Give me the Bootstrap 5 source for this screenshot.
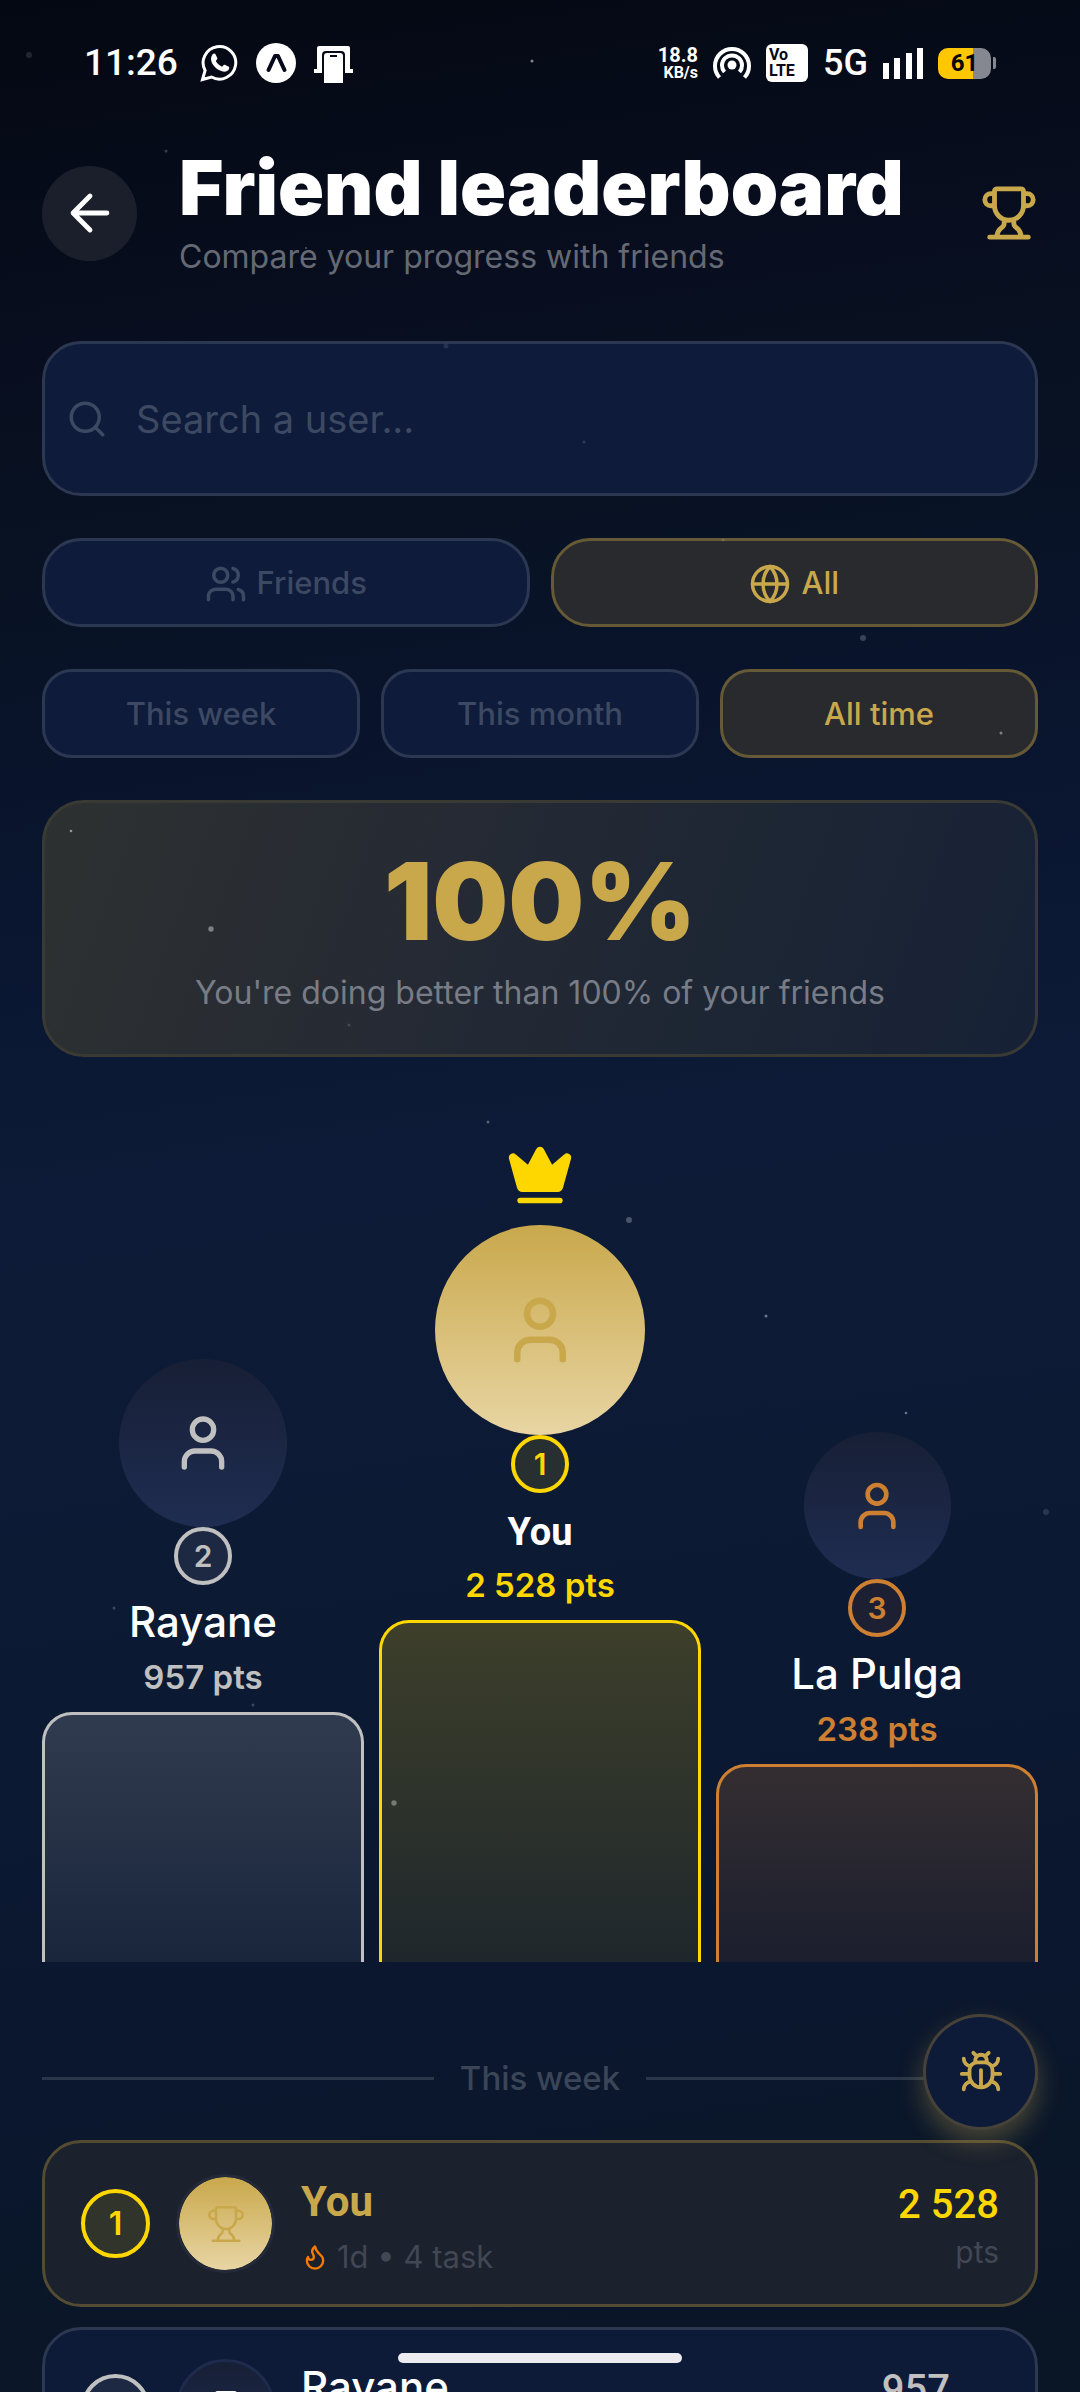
<!DOCTYPE html>
<html lang="en">
<head>
<meta charset="utf-8">
<meta name="viewport" content="width=device-width, initial-scale=1">
<title>Friend leaderboard</title>
<link href="https://cdn.jsdelivr.net/npm/bootstrap@5.3.0/dist/css/bootstrap.min.css" rel="stylesheet">
<style>
  :root { --gold:#c9a84c; --yellow:#ffd700; --silver:#c0c0c0; --bronze:#cd7f32; --line:#2c3752; --panel:#0e1b3a; --muted:#3d4962; }
  body { font-family:Inter,"Noto Sans",sans-serif; background:#070d1b; color:#fff; }
  svg { display:block; flex:none; }
  .ico { fill:none; stroke:currentColor; stroke-width:2; stroke-linecap:round; stroke-linejoin:round; }
  .i28 { width:28px; height:28px; } .i40 { width:40px; height:40px; } .i42 { width:42px; height:42px; } .i46 { width:46px; height:46px; }
  .i56 { width:56px; height:56px; } .i58 { width:58px; height:58px; } .i64 { width:64px; height:64px; }
  .i68 { width:68px; height:68px; } .i78 { width:78px; height:78px; }
  .roboto { font-family:Roboto,"Liberation Sans",sans-serif; }
  .screen { height:100vh; background:linear-gradient(172deg,#040812 0%,#080e1f 14%,#081222 22%,#09142c 31%,#0d1b38 48%,#0c1a34 62%,#0b172f 82%,#0a1729 90%,#0a1525 100%); }
  .sky { inset:0; width:100%; height:100%; pointer-events:none; z-index:2; }
  .gutter { padding-left:42px; padding-right:42px; }

  .status { height:126px; padding-left:84px; padding-right:84px; }
  .clock { font-size:37px; font-weight:500; line-height:40px; margin-right:22px; }
  .signals { gap:15px; }
  .speed { font-size:20px; line-height:20px; font-weight:700; }
  .speed small { display:block; font-size:16px; line-height:16px; }
  .volte { width:42px; height:38px; border-radius:6px; background:#fff; color:#05091a; font-size:16px; line-height:16px; font-weight:700; padding:3px; }
  .net { font-size:36px; line-height:40px; font-weight:500; }
  .battery { width:53px; height:31px; border-radius:10px; background:linear-gradient(90deg,#ffc700 66%,#868891 66%); color:#000; font-size:24px; line-height:31px; font-weight:700; }
  .nub { width:3px; height:12px; border-radius:0 2px 2px 0; background:#868891; margin-left:2px; }

  .head { padding-top:21px; gap:42px; }
  .back { width:95px; height:95px; background:#1a1f2b; color:#fff; border:0; }
  .title { font-size:76px; line-height:80px; font-weight:900; }
  .subtitle { font-size:32px; line-height:44px; margin-top:8px; color:#656974; }
  .gold { color:var(--gold); }

  .stack { padding-top:62px; display:flex; flex-direction:column; gap:42px; }
  .search { height:155px; border:3px solid var(--line); border-radius:39px; background:var(--panel); color:var(--muted); padding:0 21px; gap:28px; }
  .search input { background:none; border:0; outline:0; color:#fff; font-size:38px; line-height:48px; min-width:0; padding:0; }
  .search input::placeholder { color:var(--muted); opacity:1; }
  .gap21 { gap:21px; }
  .pill { flex:1 1 0; height:89px; border:3px solid var(--line); border-radius:39px; background:var(--panel); color:var(--muted); font-size:31px; font-weight:500; gap:10px; padding:2px 0 0; }
  .pill.slim { border-radius:30px; }
  .pill.on { border-color:#655936; background:#282a2e; color:var(--gold); }
  .better { border:3px solid #3a3a35; border-radius:42px; padding:40px; background:linear-gradient(110deg,#2d3131 0%,#252a34 40%,#1d2634 70%,#172136 100%); }
  .percent { font-size:107px; line-height:116px; font-weight:900; color:var(--gold); }
  .better p { font-size:32px; line-height:42px; margin:13px 0 0; color:#787c86; }

  .podium { padding-top:84px; gap:15px; }
  .place { flex:1 1 0; min-width:0; color:var(--tone); }
  .crown { margin-bottom:16px; }
  .face { border-radius:50%; background:linear-gradient(#171f35,#1f2d52); display:flex; align-items:center; justify-content:center; }
  .face.you { background:linear-gradient(#c9a84c,#e8d5a3); color:var(--gold); }
  .f210 { width:210px; height:210px; } .f168 { width:168px; height:168px; } .f147 { width:147px; height:147px; }
  .rank { width:58px; height:58px; border:4px solid var(--tone); border-radius:50%; background:var(--fill); font-size:30px; line-height:1; font-weight:600; color:var(--tone); display:flex; align-items:center; justify-content:center; flex:none; }
  .who { font-size:42px; line-height:52px; margin-top:11px; color:#fff; font-weight:500; }
  .who .roboto { font-size:38px; line-height:1; font-weight:700; }
  .pts { font-size:33px; line-height:42px; margin:8px 0 14px; font-weight:600; }
  .block { width:100%; border:3px solid var(--tone); border-bottom:0; border-radius:30px 30px 0 0; background:var(--slab); }
  .first { --tone:var(--yellow); --fill:#272f30; --slab:linear-gradient(#3d3f2a,#1f272c); }
  .second { --tone:var(--silver); --fill:#1d2942; --slab:linear-gradient(#313b4f,#19263b); }
  .third { --tone:var(--bronze); --fill:#1d2032; --slab:linear-gradient(#342e31,#1b1e2e); }
  .h1st { height:342px; } .h2nd { height:250px; } .h3rd { height:198px; }
  .second .f168, .third .f147 { margin-top:1px; }

  .period { margin:95px 0 41px; gap:26px; font-size:33px; line-height:42px; color:#3b4558; font-weight:500; }
  .period::before,.period::after { content:""; flex:1; height:3px; background:#2a3649; }
  .entry { border:3px solid var(--line); border-radius:39px; background:#0d1b39; padding:29px 36px; gap:26px; margin-bottom:20px; }
  .entry.me { background:#1b212d; border-color:#544c32; }
  .entry .rank { width:69px; height:69px; font-size:32px; }
  .entry .me-rank { --fill:#31342a; }
  .thumb { width:99px; height:99px; border:3px solid #1f2b4c; flex:none; background-clip:padding-box !important; }
  .thumb .ico { stroke-width:1.5; }
  .me .thumb { border-color:#242a38; }
  .nick { font-size:42px; line-height:50px; font-weight:500; }
  .me .nick { line-height:60px; font-weight:700; color:var(--gold); }
  .meta { font-size:31px; line-height:36px; margin-top:7px; color:#414754; gap:8px; }
  .score { font-size:40px; line-height:54px; font-weight:500; color:var(--tone); }
  .unit { font-size:30px; line-height:34px; margin-top:3px; color:#414754; }
  .more { margin-left:-5px; }
  .flame { color:#f57c00; }
  .fab { right:42px; bottom:262px; width:115px; height:116px; border:3px solid #464239; background:#0d1a38; box-shadow:0 12px 26px rgba(201,168,76,.32); z-index:3; padding:0; }
  .homebar { left:0; right:0; bottom:29px; width:284px; height:10px; border-radius:5px; background:#ebebf0; z-index:4; }
</style>
</head>
<body>
<svg class="d-none" aria-hidden="true">
  <symbol id="user" viewBox="0 0 24 24"><path d="M19 21v-2a4 4 0 0 0-4-4H9a4 4 0 0 0-4 4v2"/><circle cx="12" cy="7" r="4"/></symbol>
  <symbol id="trophy" viewBox="0 0 24 24"><path d="M10 14.66v1.626a2 2 0 0 1-.976 1.696A5 5 0 0 0 7 21.978M14 14.66v1.626a2 2 0 0 0 .976 1.696A5 5 0 0 1 17 21.978M18 9h1.5a1 1 0 0 0 0-5H18M4 22h16M6 9a6 6 0 0 0 12 0V3a1 1 0 0 0-1-1H7a1 1 0 0 0-1 1zM6 9H4.5a1 1 0 0 1 0-5H6"/></symbol>
</svg>

<div class="screen position-relative overflow-hidden">
  <svg class="sky position-absolute" viewBox="0 0 1080 2392" preserveAspectRatio="none" fill="#fff" aria-hidden="true">
    <circle cx="29" cy="55" r="3" opacity=".12"/><circle cx="166" cy="151" r="1.5" opacity=".2"/><circle cx="532" cy="61" r="1.5" opacity=".5"/><circle cx="306" cy="248" r="1" opacity=".3"/><circle cx="446" cy="346" r="2.5" opacity=".1"/><circle cx="584" cy="442" r="1.5" opacity=".15"/><circle cx="723" cy="540" r="1.5" opacity=".15"/><circle cx="863" cy="638" r="3" opacity=".2"/><circle cx="1001" cy="733" r="1.5" opacity=".4"/><circle cx="71" cy="831" r="1.3" opacity=".5"/><circle cx="211" cy="929" r="2.7" opacity=".4"/><circle cx="349" cy="1025" r="1.5" opacity=".15"/><circle cx="488" cy="1122" r="1.5" opacity=".3"/><circle cx="629" cy="1220" r="3" opacity=".25"/><circle cx="766" cy="1316" r="1.5" opacity=".4"/><circle cx="906" cy="1413" r="1.3" opacity=".4"/><circle cx="1046" cy="1512" r="3" opacity=".13"/><circle cx="114" cy="1608" r="1.5" opacity=".2"/><circle cx="253" cy="1705" r="1.5" opacity=".2"/><circle cx="394" cy="1803" r="2.7" opacity=".35"/>
  </svg>

  <div class="status roboto d-flex align-items-center justify-content-between">
    <div class="d-flex align-items-center">
      <span class="clock">11:26</span>
      <svg width="154" height="42" viewBox="0 0 154 42" aria-hidden="true">
        <path d="M2.500 37.500l2.600-9A16.300 16.300 0 1 1 11.500 35z" fill="none" stroke="#fff" stroke-width="3"/>
        <path d="M12.500 12.500c1-1.200 2.400-1.200 3-.2l1.800 3.800c.3 1-.2 1.600-1.500 3 1.300 2.500 3.400 4.400 6.200 5.600 1.500-1.700 2-2.300 2.900-1.900l3.900 2c.8.5.5 2.400-.6 3.500-1.500 1.500-4 1.900-7 .8-4.600-1.700-8.200-5.300-9.600-9-.9-2.600-.8-5.400.9-7.600z" fill="#fff"/>
        <circle cx="76" cy="21" r="20" fill="#fff"/>
        <path d="M68.500 28L75 14h3l6.500 14" fill="none" stroke="#05091a" stroke-width="4" stroke-linecap="round" stroke-linejoin="round"/>
        <path d="M117 27V6q0-2 2-2h29q2 0 2 2v21h3v4h-39v-4z" fill="#fff"/>
        <path d="M122 41V13q0-4 4-4h15q4 0 4 4v28z" fill="#05091a"/>
        <path d="M124 41V14q0-3 3-3h13q3 0 3 3v27z" fill="#fff"/><path d="M130 14h7" stroke="#05091a" stroke-width="2"/>
      </svg>
    </div>
    <div class="signals d-flex align-items-center">
      <div class="speed text-end">18.8<small class="fw-bold">KB/s</small></div>
      <svg width="38" height="36" viewBox="0 0 38 36" fill="none" stroke="#fff" stroke-width="4" aria-hidden="true">
        <path d="M6.500 32.500a17 17 0 1 1 25 0M11.500 27a10 10 0 1 1 15 0"/><circle cx="19" cy="20" r="4.500" fill="#fff" stroke="none"/>
      </svg>
      <div class="volte">Vo<br>LTE</div>
      <span class="net">5G</span>
      <svg width="40" height="31" viewBox="0 0 40 31" fill="#fff" aria-hidden="true"><rect y="15" width="6" height="16"/><rect x="11" y="10" width="6" height="21"/><rect x="23" y="5" width="6" height="26"/><rect x="34" width="6" height="31"/></svg>
      <div class="d-flex align-items-center"><div class="battery text-center">61</div><div class="nub"></div></div>
    </div>
  </div>

  <header class="head gutter d-flex align-items-center">
    <button type="button" class="back rounded-circle d-flex align-items-center justify-content-center p-0" aria-label="Back">
      <svg class="ico i58" viewBox="0 0 24 24"><path d="m12 19-7-7 7-7M19 12H5"/></svg>
    </button>
    <div class="flex-grow-1 text-nowrap">
      <h1 class="title m-0">Friend leaderboard</h1>
      <p class="subtitle mb-0">Compare your progress with friends</p>
    </div>
    <svg class="ico i58 gold" aria-hidden="true"><use href="#trophy"/></svg>
  </header>

  <main class="gutter">
    <div class="stack">
      <div class="search d-flex align-items-center">
        <label for="q" aria-label="Search a user"><svg class="ico i42" viewBox="0 0 24 24" aria-hidden="true"><path d="m21 21-4.300-4.300"/><circle cx="11" cy="11" r="8"/></svg></label>
        <input id="q" class="flex-grow-1" type="text" placeholder="Search a user...">
      </div>
      <div class="d-flex gap21">
        <button type="button" class="pill d-flex align-items-center justify-content-center">
          <svg class="ico i42" viewBox="0 0 24 24" aria-hidden="true"><path d="M16 21v-2a4 4 0 0 0-4-4H6a4 4 0 0 0-4 4v2"/><circle cx="9" cy="7" r="4"/><path d="M22 21v-2a4 4 0 0 0-3-3.870M16 3.130a4 4 0 0 1 0 7.750"/></svg>Friends
        </button>
        <button type="button" class="pill on d-flex align-items-center justify-content-center">
          <svg class="ico i42" viewBox="0 0 24 24" aria-hidden="true"><circle cx="12" cy="12" r="10"/><path d="M12 2a14.500 14.500 0 0 0 0 20 14.500 14.500 0 0 0 0-20M2 12h20"/></svg>All
        </button>
      </div>
      <div class="d-flex gap21">
        <button type="button" class="pill slim">This week</button>
        <button type="button" class="pill slim">This month</button>
        <button type="button" class="pill slim on">All time</button>
      </div>
      <section class="better text-center">
        <div class="percent">100%</div>
        <p>You're doing better than 100% of your friends</p>
      </section>
    </div>

    <section class="podium d-flex align-items-end">
      <div class="place second d-flex flex-column align-items-center">
        <div class="face f168"><svg class="ico i64"><use href="#user"/></svg></div>
        <div class="rank">2</div>
        <div class="who">Rayane</div>
        <div class="pts">957 pts</div>
        <div class="block h2nd"></div>
      </div>
      <div class="place first d-flex flex-column align-items-center">
        <svg class="ico i68 crown" viewBox="0 0 24 24" aria-hidden="true"><path fill="currentColor" d="M11.562 3.266a.5.5 0 0 1 .876 0L15.390 8.870a1 1 0 0 0 1.516.294L21.183 5.500a.5.5 0 0 1 .798.519l-2.834 10.246a1 1 0 0 1-.956.734H5.810a1 1 0 0 1-.957-.734L2.020 6.020a.5.5 0 0 1 .798-.519l4.276 3.664a1 1 0 0 0 1.516-.294z"/><path d="M5 21h14"/></svg>
        <div class="face you f210"><svg class="ico i78"><use href="#user"/></svg></div>
        <div class="rank">1</div>
        <div class="who"><span class="roboto">You</span></div>
        <div class="pts">2 528 pts</div>
        <div class="block h1st"></div>
      </div>
      <div class="place third d-flex flex-column align-items-center">
        <div class="face f147"><svg class="ico i56"><use href="#user"/></svg></div>
        <div class="rank">3</div>
        <div class="who">La Pulga</div>
        <div class="pts">238 pts</div>
        <div class="block h3rd"></div>
      </div>
    </section>

    <div class="period d-flex align-items-center">This week</div>

    <section>
      <div class="entry me first d-flex align-items-center">
        <div class="rank me-rank">1</div>
        <div class="face you thumb"><svg class="ico i40"><use href="#trophy"/></svg></div>
        <div class="flex-grow-1">
          <div class="nick roboto">You</div>
          <div class="meta d-flex align-items-center"><svg class="ico i28 flame" viewBox="0 0 24 24" aria-hidden="true"><path d="M8.500 14.500A2.500 2.500 0 0 0 11 12c0-1.380-.5-2-1-3-1.072-2.143-.224-4.054 2-6 .5 2.500 2 4.900 4 6.500 2 1.600 3 3.500 3 5.500a7 7 0 1 1-14 0c0-1.153.433-2.294 1-3a2.500 2.500 0 0 0 2.500 2.500z"/></svg>1d • 4 task</div>
        </div>
        <div class="text-end">
          <div class="score roboto">2 528</div>
          <div class="unit">pts</div>
        </div>
      </div>
      <div class="entry second d-flex align-items-center">
        <div class="rank">2</div>
        <div class="face thumb"><svg class="ico i40"><use href="#trophy"/></svg></div>
        <div class="flex-grow-1">
          <div class="nick">Rayane</div>
          <div class="meta">&nbsp;</div>
        </div>
        <div class="text-end">
          <div class="score roboto">957</div>
          <div class="unit">&nbsp;</div>
        </div>
        <svg class="ico i28 more" viewBox="0 0 24 24" aria-hidden="true"><path d="m9 18 6-6-6-6"/></svg>
      </div>
    </section>
  </main>

  <button type="button" class="fab gold rounded-circle position-absolute d-flex align-items-center justify-content-center" aria-label="Report a bug">
    <svg class="ico i46" viewBox="0 0 24 24"><path d="m8 2 1.880 1.880M14.120 3.880 16 2M9 7.130v-1a3.003 3.003 0 1 1 6 0v1M12 20c-3.300 0-6-2.700-6-6v-3a4 4 0 0 1 4-4h4a4 4 0 0 1 4 4v3c0 3.300-2.700 6-6 6M12 20v-9M6.530 9C4.600 8.800 3 7.100 3 5M6 13H2M3 21c0-2.100 1.700-3.900 3.800-4M20.970 5c0 2.100-1.600 3.800-3.500 4M22 13h-4M17.200 17c2.100.1 3.800 1.900 3.800 4"/></svg>
  </button>
  <div class="homebar position-absolute mx-auto"></div>
</div>
<script src="https://cdn.jsdelivr.net/npm/bootstrap@5.3.0/dist/js/bootstrap.bundle.min.js"></script>
</body>
</html>
